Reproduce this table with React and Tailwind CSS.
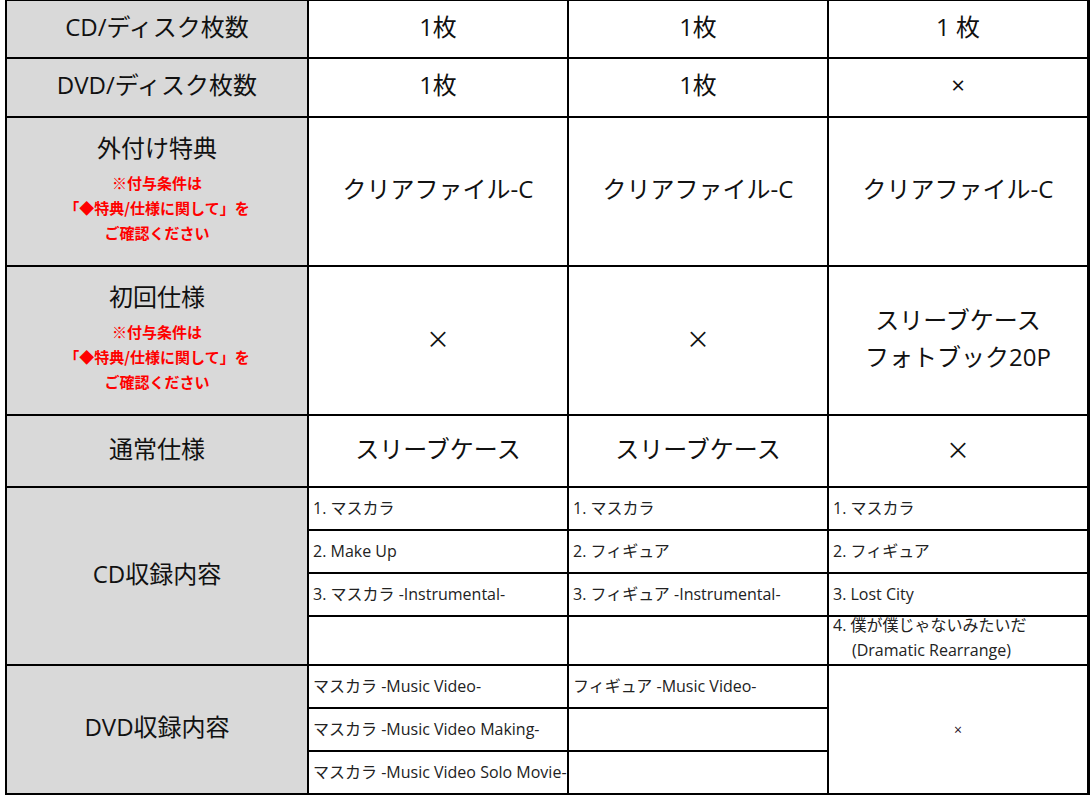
import React from "react";

const F = "font-['Open_Sans','Noto_Sans_CJK_JP',sans-serif]";
const J = "font-['Noto_Sans_CJK_JP',sans-serif]";

function Note() {
  return (
    <div className={`mt-[8px] text-[15px] leading-[25px] font-bold text-[#ff0000] ${J}`}>
      <div>※付与条件は</div>
      <div>「◆特典/仕様に関して」を</div>
      <div>ご確認ください</div>
    </div>
  );
}

export default function App() {
  const head = "bg-[#d9d9d9] flex flex-col items-center justify-center text-center text-[24px] text-[#111] pb-[5px]";
  const big = "bg-white flex flex-col items-center justify-center text-center text-[24px] text-[#111] pb-[5px]";
  const small = "bg-white flex items-center pl-[4px] text-[16px] text-[#222] whitespace-nowrap pb-[2px]";
  return (
    <div className={`w-[1092px] h-[797px] bg-white ${F}`}>
      <div className="ml-[5px] w-[1085px] bg-black pt-[1px] pl-[2px] pr-[3px] pb-[2px] grid grid-cols-[300px_258px_258px_258px] grid-rows-[56px_57px_147px_147px_70px_41px_41px_41px_47px_41px_41px_41px] gap-[2px]">
        {/* Row 1 */}
        <div className={`${head} col-start-1 row-start-1`}>CD/ディスク枚数</div>
        <div className={`${big} col-start-2 row-start-1`}>1枚</div>
        <div className={`${big} col-start-3 row-start-1`}>1枚</div>
        <div className={`${big} col-start-4 row-start-1`}>1 枚</div>

        {/* Row 2 */}
        <div className={`${head} col-start-1 row-start-2`}>DVD/ディスク枚数</div>
        <div className={`${big} col-start-2 row-start-2`}>1枚</div>
        <div className={`${big} col-start-3 row-start-2`}>1枚</div>
        <div className={`${big} col-start-4 row-start-2`}>×</div>

        {/* Row 3 */}
        <div className={`${head} col-start-1 row-start-3`}>
          <div className="leading-[28px]">外付け特典</div>
          <Note />
        </div>
        <div className={`${big} col-start-2 row-start-3`}>クリアファイル-C</div>
        <div className={`${big} col-start-3 row-start-3`}>クリアファイル-C</div>
        <div className={`${big} col-start-4 row-start-3`}>クリアファイル-C</div>

        {/* Row 4 */}
        <div className={`${head} col-start-1 row-start-4`}>
          <div className="leading-[28px]">初回仕様</div>
          <Note />
        </div>
        <div className={`${big} col-start-2 row-start-4 ${J}`}>×</div>
        <div className={`${big} col-start-3 row-start-4 ${J}`}>×</div>
        <div className={`${big} col-start-4 row-start-4 leading-[37px]`}>
          <div>スリーブケース</div>
          <div>フォトブック20P</div>
        </div>

        {/* Row 5 */}
        <div className={`${head} col-start-1 row-start-5`}>通常仕様</div>
        <div className={`${big} col-start-2 row-start-5`}>スリーブケース</div>
        <div className={`${big} col-start-3 row-start-5`}>スリーブケース</div>
        <div className={`${big} col-start-4 row-start-5 ${J}`}>×</div>

        {/* CD */}
        <div className={`${head} col-start-1 row-start-6 row-span-4`}>CD収録内容</div>
        <div className={`${small} col-start-2 row-start-6`}>1. マスカラ</div>
        <div className={`${small} col-start-2 row-start-7`}>2. Make Up</div>
        <div className={`${small} col-start-2 row-start-8`}>3. マスカラ -Instrumental-</div>
        <div className={`${small} col-start-2 row-start-9`}></div>
        <div className={`${small} col-start-3 row-start-6`}>1. マスカラ</div>
        <div className={`${small} col-start-3 row-start-7`}>2. フィギュア</div>
        <div className={`${small} col-start-3 row-start-8`}>3. フィギュア -Instrumental-</div>
        <div className={`${small} col-start-3 row-start-9`}></div>
        <div className={`${small} col-start-4 row-start-6`}>1. マスカラ</div>
        <div className={`${small} col-start-4 row-start-7`}>2. フィギュア</div>
        <div className={`${small} col-start-4 row-start-8`}>3. Lost City</div>
        <div className={`${small} col-start-4 row-start-9`}>
          <div className="flex flex-col leading-[25px] mt-[-3px]">
            <div>4. 僕が僕じゃないみたいだ</div>
            <div className="pl-[19px]">(Dramatic Rearrange)</div>
          </div>
        </div>

        {/* DVD */}
        <div className={`${head} col-start-1 row-start-10 row-span-3`}>DVD収録内容</div>
        <div className={`${small} col-start-2 row-start-10`}>マスカラ -Music Video-</div>
        <div className={`${small} col-start-2 row-start-11`}>マスカラ -Music Video Making-</div>
        <div className={`${small} col-start-2 row-start-12`}>マスカラ -Music Video Solo Movie-</div>
        <div className={`${small} col-start-3 row-start-10`}>フィギュア -Music Video-</div>
        <div className={`${small} col-start-3 row-start-11`}></div>
        <div className={`${small} col-start-3 row-start-12`}></div>
        <div className="bg-white col-start-4 row-start-10 row-span-3 flex items-center justify-center text-[14px] text-[#2a1028]">×</div>
      </div>
    </div>
  );
}
